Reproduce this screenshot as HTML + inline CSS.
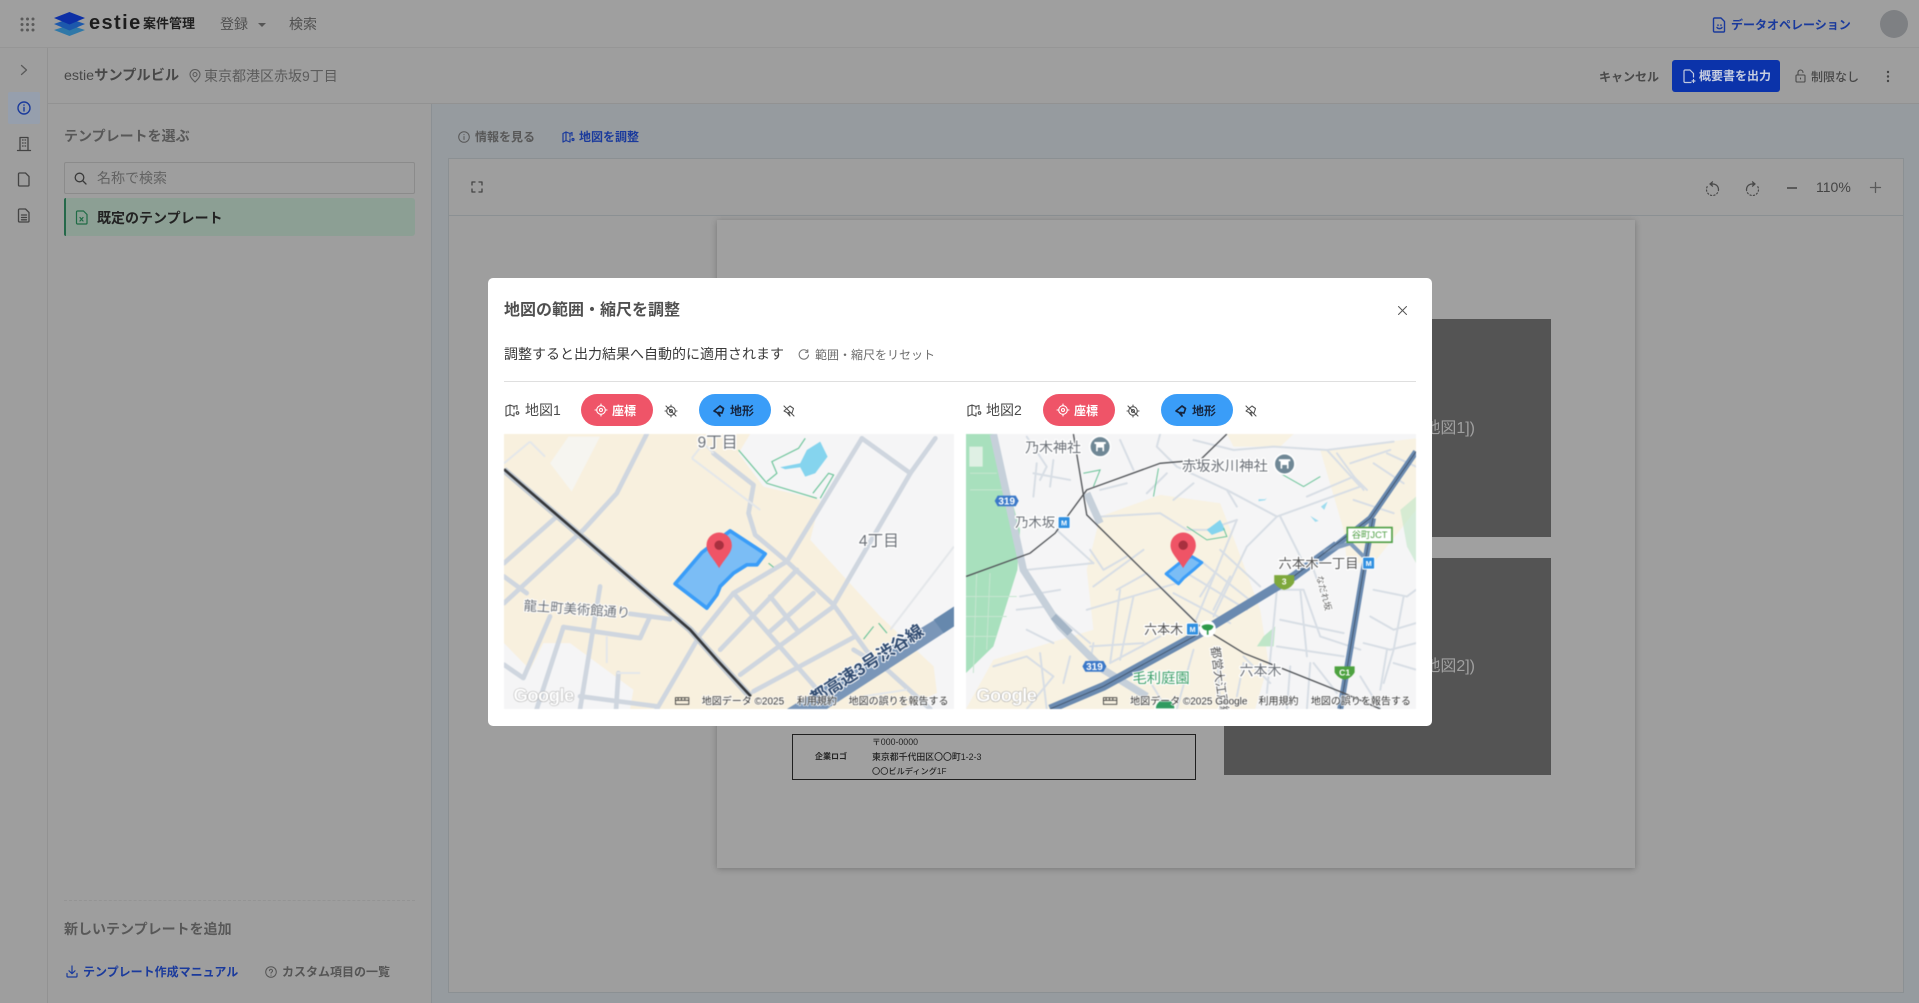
<!DOCTYPE html>
<html lang="ja"><head><meta charset="utf-8"><title>estie 案件管理</title>
<style>
*{box-sizing:border-box}
html,body{margin:0;padding:0;width:1919px;height:1003px;overflow:hidden;background:#9e9e9e}
body{font-family:"Liberation Sans","Noto Sans CJK JP",sans-serif;color:#555}
#r{position:relative;width:1919px;height:1003px;overflow:hidden;filter:blur(.3px)}
.a{position:absolute}
.t{position:absolute;white-space:nowrap;line-height:20px;font-size:14px}
.b{font-weight:700}
svg{position:absolute;overflow:visible}
svg text{font-family:"Liberation Sans","Noto Sans CJK JP",sans-serif}
.i{fill:none;stroke:currentColor;stroke-width:1.3;stroke-linecap:round;stroke-linejoin:round}
.lb{paint-order:stroke;stroke:#fff;stroke-width:8px;stroke-linejoin:round;fill:#6a6f76}
.at{font-size:30px;fill:#333;paint-order:stroke;stroke:rgba(255,255,255,.75);stroke-width:5px}
.gg{font-size:56px;font-weight:700;fill:#fff;stroke:#9a9a9a;stroke-width:2.5px;paint-order:stroke;letter-spacing:-2px}
.m{filter:blur(.5px)}
</style></head><body><div id="r">

<!-- top bar -->
<div class="a" style="left:0;top:0;width:1919px;height:48px;background:#9f9f9f;border-bottom:1px solid #969696"></div>
<svg style="left:20px;top:17px" width="15" height="15" fill="#5a5a5a"><circle cx="2" cy="2" r="1.5"/><circle cx="7.5" cy="2" r="1.5"/><circle cx="13" cy="2" r="1.5"/><circle cx="2" cy="7.5" r="1.5"/><circle cx="7.5" cy="7.5" r="1.5"/><circle cx="13" cy="7.5" r="1.5"/><circle cx="2" cy="13" r="1.5"/><circle cx="7.5" cy="13" r="1.5"/><circle cx="13" cy="13" r="1.5"/></svg>
<svg style="left:54px;top:12px" width="31" height="24"><path d="M15.5 13 31 18 15.500 24 0 18Z" fill="#2f78a8"/><path d="M15.500 6.500 31 12 15.500 18.500 0 12Z" fill="#1c58ac"/><path d="M15.500 0 31 6 15.500 12.500 0 6Z" fill="#0d2fa5"/></svg>
<div class="t b" style="left:89px;top:11px;font-size:20px;line-height:24px;letter-spacing:1.4px;color:#1d1d1d">estie</div>
<div class="t b" style="left:143px;top:14px;font-size:13px;color:#1f1f1f">案件管理</div>
<div class="t" style="left:220px;top:14px;color:#505050">登録</div>
<div class="a" style="left:258px;top:23px;border:4px solid transparent;border-top:4px solid #555"></div>
<div class="t" style="left:289px;top:14px;color:#505050">検索</div>
<svg class="i" style="left:1713px;top:17px;color:#1a3a9c;stroke-width:1.4" width="13" height="16"><path d="M1.500 1h6.500l3.500 3.500v9.500a1 1 0 0 1-1 1h-9a1 1 0 0 1-1-1V2a1 1 0 0 1 1-1Z"/><path d="M4 10.500c1 1.500 4 1.500 5 0"/><path d="M5 8v.5M8 8v.5"/></svg>
<div class="t b" style="left:1731px;top:15px;font-size:12px;color:#1a3a9c">データオペレーション</div>
<div class="a" style="left:1880px;top:10px;width:28px;height:28px;border-radius:50%;background:#7e8083"></div>

<!-- left rail -->
<div class="a" style="left:47px;top:48px;width:1px;height:955px;background:#929292"></div>
<svg class="i" style="left:19px;top:64px;color:#5a5a5a" width="10" height="12"><path d="M2.500 1.500 7.500 6 2.500 10.500"/></svg>
<div class="a" style="left:8px;top:92px;width:32px;height:32px;background:#969fad;border-radius:2px"></div>
<svg class="i" style="left:17px;top:101px;color:#1a3a9c;stroke-width:1.4" width="14" height="14"><circle cx="7" cy="7" r="6"/><path d="M7 6.500v3.500M7 4v.3"/></svg>
<svg class="i" style="left:17px;top:136px;color:#444" width="14" height="15"><path d="M3 14V1.500h8V14M.5 14.500h13M5.500 4h.6M8 4h.6M5.500 7h.6M8 7h.6M5.500 10h.6M8 10h.6"/></svg>
<svg class="i" style="left:18px;top:172px;color:#444" width="12" height="15"><path d="M1.500 1h6l3.500 3.500v8.500a1 1 0 0 1-1 1h-8.500a1 1 0 0 1-1-1V2a1 1 0 0 1 1-1Z"/></svg>
<svg class="i" style="left:18px;top:208px;color:#444" width="12" height="15"><path d="M1.500 1h6l3.500 3.500v8.500a1 1 0 0 1-1 1h-8.500a1 1 0 0 1-1-1V2a1 1 0 0 1 1-1Z"/><path d="M3.500 7h5M3.500 9.500h5M3.500 11.800h5"/></svg>

<!-- sub header -->
<div class="a" style="left:48px;top:103px;width:1871px;height:1px;background:#929292"></div>
<div class="t" style="left:64px;top:66px;font-size:14.250px;color:#484848">estie<span class="b">サンプルビル</span></div>
<svg class="i" style="left:189px;top:69px;color:#5a5a5a;stroke-width:1.1" width="12" height="14"><path d="M6 13C3 10 1 8 1 5.500a5 5 0 0 1 10 0C11 8 9 10 6 13Z"/><circle cx="6" cy="5.500" r="2"/></svg>
<div class="t" style="left:204px;top:66px;color:#5c5c5c">東京都港区赤坂9丁目</div>
<div class="t b" style="left:1599px;top:67px;font-size:12px;color:#4a4a4a">キャンセル</div>
<div class="a" style="left:1672px;top:60px;width:108px;height:32px;background:#0b33aa;border-radius:3px"></div>
<svg class="i" style="left:1683px;top:69px;color:#c3cbe0;stroke-width:1.200" width="13" height="15"><path d="M8 13.500H2a1 1 0 0 1-1-1V2a1 1 0 0 1 1-1h5l3.500 3.500V8"/><path d="M10.500 10.500v3M9 12h3"/></svg>
<div class="t b" style="left:1699px;top:66px;font-size:12px;color:#c6cde0">概要書を出力</div>
<svg class="i" style="left:1795px;top:69px;color:#4a4a4a;stroke-width:1.1" width="11" height="14"><rect x="1" y="6" width="9" height="7" rx="1"/><path d="M3 6V3.500a2.500 2.500 0 0 1 5 0"/><path d="M5.500 9v1"/></svg>
<div class="t" style="left:1811px;top:67px;font-size:12px;color:#474747;font-weight:500">制限なし</div>
<svg style="left:1886px;top:70px" width="4" height="13" fill="#444"><circle cx="2" cy="2" r="1.200"/><circle cx="2" cy="6.500" r="1.200"/><circle cx="2" cy="11" r="1.200"/></svg>

<!-- left panel -->
<div class="t b" style="left:64px;top:126px;color:#585858">テンプレートを選ぶ</div>
<div class="a" style="left:64px;top:162px;width:351px;height:32px;border:1px solid #8b8b8b;border-radius:2px"></div>
<svg class="i" style="left:74px;top:172px;color:#3a3a3a;stroke-width:1.300" width="13" height="13"><circle cx="5.500" cy="5.500" r="4.300"/><path d="M9 9l3 3"/></svg>
<div class="t" style="left:97px;top:168px;color:#626262">名称で検索</div>
<div class="a" style="left:64px;top:198px;width:351px;height:38px;background:#8c9f94;border-left:2px solid #25694a;border-radius:2px 3px 3px 2px"></div>
<svg class="i" style="left:76px;top:210px;color:#1f6b45;stroke-width:1.200" width="12" height="15"><path d="M1.500 1h6l3.500 3.500v8.500a1 1 0 0 1-1 1h-8.500a1 1 0 0 1-1-1V2a1 1 0 0 1 1-1Z"/><path d="M4 7.500l3 3.500M7 7.500l-3 3.500"/></svg>
<div class="t b" style="left:97px;top:208px;color:#222">既定のテンプレート</div>
<div class="a" style="left:64px;top:900px;width:351px;border-top:1px dashed #949494"></div>
<div class="t b" style="left:64px;top:919px;color:#585858">新しいテンプレートを追加</div>
<svg class="i" style="left:66px;top:965px;color:#1a3a9c;stroke-width:1.200" width="12" height="13"><path d="M6 1v7.500M3 5.800 6 8.700 9 5.800M1 8.500v2.500a1 1 0 0 0 1 1h8a1 1 0 0 0 1-1V8.500"/></svg>
<div class="t b" style="left:83px;top:962px;font-size:12px;color:#1a3a9c">テンプレート作成マニュアル</div>
<svg class="i" style="left:265px;top:966px;color:#555;stroke-width:1" width="12" height="12"><circle cx="6" cy="6" r="5.300"/><path d="M4.500 4.800a1.500 1.500 0 1 1 2.200 1.300c-.5.300-.7.600-.7 1.100M6 9v.2"/></svg>
<div class="t b" style="left:282px;top:962px;font-size:12px;color:#555">カスタム項目の一覧</div>
<div class="a" style="left:431px;top:104px;width:1px;height:899px;background:#8b9094"></div>

<!-- main area -->
<div class="a" style="left:432px;top:104px;width:1487px;height:899px;background:#969b9f"></div>
<svg class="i" style="left:458px;top:131px;color:#585858;stroke-width:1" width="12" height="12"><circle cx="6" cy="6" r="5.300"/><path d="M6 5.500v3M6 3.500v.2"/></svg>
<div class="t b" style="left:475px;top:127px;font-size:12px;color:#585858">情報を見る</div>
<svg class="i" style="left:562px;top:131px;color:#1a3a9c;stroke-width:1.200" width="13" height="12"><path d="M1 2.500 4 1l4 1.500 2-1v3M1 2.500V11l3-1.500L8 11V8M4 1v8.500M8 2.500V6"/><circle cx="11" cy="8.500" r="1"/></svg>
<div class="t b" style="left:579px;top:127px;font-size:12px;color:#1a3a9c">地図を調整</div>

<div class="a" style="left:448px;top:158px;width:1456px;height:835px;background:#9e9e9e;border:1px solid #8b9093"></div>
<div class="a" style="left:449px;top:215px;width:1454px;height:1px;background:#8b9093"></div>
<svg class="i" style="left:471px;top:181px;color:#444" width="12" height="12"><path d="M1 4V1h3M8 1h3v3M11 8v3H8M4 11H1V8"/></svg>
<svg class="i" style="left:1705px;top:181px;color:#4a4a4a;stroke-width:1.200" width="15" height="17"><path d="M5 3h3a5.500 5.500 0 0 1 5.500 5.500"/><path d="M13.500 8.500a6 6 0 0 1-6 6 6 6 0 0 1-6-6 6 6 0 0 1 2-4.500" stroke-dasharray="1.200 2.200"/><path d="M7.500 .8 5 3l2.500 2.200" fill="#4a4a4a"/></svg>
<svg class="i" style="left:1745px;top:181px;color:#4a4a4a;stroke-width:1.200" width="15" height="17"><path d="M10 3H7A5.500 5.500 0 0 0 1.500 8.500"/><path d="M1.500 8.500a6 6 0 0 0 6 6 6 6 0 0 0 6-6 6 6 0 0 0-2-4.500" stroke-dasharray="1.200 2.200"/><path d="M7.500 .8 10 3 7.500 5.200" fill="#4a4a4a"/></svg>
<div class="a" style="left:1787px;top:187px;width:10px;height:1.500px;background:#5a5a5a"></div>
<div class="t" style="left:1816px;top:177px;color:#444;font-size:14px">110%</div>
<svg class="i" style="left:1870px;top:182px;color:#5a5a5a" width="11" height="11"><path d="M5.500 .5v10M.5 5.500h10"/></svg>

<!-- paper -->
<div class="a" style="left:717px;top:220px;width:918px;height:648px;background:#a0a0a0;box-shadow:0 1px 6px rgba(0,0,0,.25)"></div>
<div class="a" style="left:1224px;top:319px;width:327px;height:218px;background:#545454"></div>
<div class="a" style="left:1224px;top:558px;width:327px;height:217px;background:#545454"></div>
<div class="t" style="right:444px;top:419px;font-size:16px;color:#a0a0a0">([地図1])</div>
<div class="t" style="right:444px;top:657px;font-size:16px;color:#a0a0a0">([地図2])</div>
<div class="a" style="left:792px;top:734px;width:404px;height:46px;border:1px solid #1f1f1f"></div>
<div class="t b" style="left:815px;top:747px;font-size:8px;color:#222">企業ロゴ</div>
<div class="t" style="left:872px;top:732px;font-size:8.800px;color:#222;font-weight:500">〒000-0000</div>
<div class="t" style="left:872px;top:747px;font-size:8.900px;color:#222;font-weight:500">東京都千代田区〇〇町1-2-3</div>
<div class="t" style="left:872px;top:762px;font-size:8.200px;color:#222;font-weight:500">〇〇ビルディング1F</div>

<!-- modal -->
<div class="a" style="left:488px;top:278px;width:944px;height:448px;background:#fff;border-radius:5px"></div>
<div class="t b" style="left:504px;top:301px;font-size:16px;color:#505050">地図の範囲・縮尺を調整</div>
<svg class="i" style="left:1398px;top:306px;color:#555;stroke-width:1" width="9" height="9"><path d="M.5 .5l8 8M8.500 .5l-8 8"/></svg>
<div class="t" style="left:504px;top:344px;color:#3a3a3a">調整すると出力結果へ自動的に適用されます</div>
<svg class="i" style="left:798px;top:349px;color:#777;stroke-width:1.100" width="11" height="11"><path d="M9.500 2.500a4.700 4.700 0 1 0 1 3.500"/><path d="M9.800 .8v2.500H7.500"/></svg>
<div class="t" style="left:815px;top:345px;font-size:12px;color:#6e6e6e">範囲・縮尺をリセット</div>
<div class="a" style="left:504px;top:381px;width:912px;height:1px;background:#dfdfdf"></div>

<!-- map 1 head -->
<svg class="i" style="left:505px;top:404px;color:#4d4d4d;stroke-width:1.100" width="15" height="14"><path d="M1 2.500 5 1l4 1.500 3-1v4M1 2.500V12l4-1.500L9 12V9M5 1v9.500M9 2.500V5"/><circle cx="12.500" cy="9" r="1.300"/></svg>
<div class="t" style="left:525px;top:400px;color:#4a4a4a">地図1</div>
<div class="a" style="left:581px;top:394px;width:72px;height:32px;border-radius:16px;background:#ef5468"></div>
<svg class="i" style="left:595px;top:404px;color:#fff;stroke-width:1.100" width="12" height="12"><circle cx="6" cy="6" r="4.300"/><circle cx="6" cy="6" r="1.500"/><path d="M6 0v1.700M6 10.300V12M0 6h1.700M10.300 6H12"/></svg>
<div class="t b" style="left:612px;top:401px;font-size:12px;color:#fff">座標</div>
<svg class="i" style="left:665px;top:405px;color:#555;stroke-width:1.100" width="12" height="12"><circle cx="6" cy="6" r="4.300"/><circle cx="6" cy="6" r="1.500"/><path d="M6 0v1.700M6 10.300V12M0 6h1.700M10.300 6H12M1 1l10 10"/></svg>
<div class="a" style="left:699px;top:394px;width:72px;height:32px;border-radius:16px;background:#3a9df8"></div>
<svg style="left:713px;top:405px" width="12" height="12"><path d="M1 6 7 1l3.500 2.500L9 8 5.500 7.500 7 11 4 7.500Z" fill="none" stroke="#15253f" stroke-width="1.700" stroke-linejoin="round"/></svg>
<div class="t b" style="left:730px;top:401px;font-size:12px;color:#15253f">地形</div>
<svg class="i" style="left:783px;top:405px;color:#555;stroke-width:1.100" width="12" height="12"><path d="M1 6 7 1l3.500 2.500L9 8 5.500 7.500 7 11 4 7.500ZM1 1l10 10"/></svg>

<!-- map 2 head -->
<svg class="i" style="left:967px;top:404px;color:#4d4d4d;stroke-width:1.100" width="15" height="14"><path d="M1 2.500 5 1l4 1.500 3-1v4M1 2.500V12l4-1.500L9 12V9M5 1v9.500M9 2.500V5"/><circle cx="12.500" cy="9" r="1.300"/></svg>
<div class="t" style="left:986px;top:400px;color:#4a4a4a">地図2</div>
<div class="a" style="left:1043px;top:394px;width:72px;height:32px;border-radius:16px;background:#ef5468"></div>
<svg class="i" style="left:1057px;top:404px;color:#fff;stroke-width:1.100" width="12" height="12"><circle cx="6" cy="6" r="4.300"/><circle cx="6" cy="6" r="1.500"/><path d="M6 0v1.700M6 10.300V12M0 6h1.700M10.300 6H12"/></svg>
<div class="t b" style="left:1074px;top:401px;font-size:12px;color:#fff">座標</div>
<svg class="i" style="left:1127px;top:405px;color:#555;stroke-width:1.100" width="12" height="12"><circle cx="6" cy="6" r="4.300"/><circle cx="6" cy="6" r="1.500"/><path d="M6 0v1.700M6 10.300V12M0 6h1.700M10.300 6H12M1 1l10 10"/></svg>
<div class="a" style="left:1161px;top:394px;width:72px;height:32px;border-radius:16px;background:#3a9df8"></div>
<svg style="left:1175px;top:405px" width="12" height="12"><path d="M1 6 7 1l3.500 2.500L9 8 5.500 7.500 7 11 4 7.500Z" fill="none" stroke="#15253f" stroke-width="1.700" stroke-linejoin="round"/></svg>
<div class="t b" style="left:1192px;top:401px;font-size:12px;color:#15253f">地形</div>
<svg class="i" style="left:1245px;top:405px;color:#555;stroke-width:1.100" width="12" height="12"><path d="M1 6 7 1l3.500 2.500L9 8 5.500 7.500 7 11 4 7.500ZM1 1l10 10"/></svg>

<!-- MAP 1 -->
<svg class="m" style="left:504px;top:434px;overflow:hidden" width="450" height="275" viewBox="12 12 1349 826" preserveAspectRatio="none">
<rect x="12" y="12" width="1349" height="826" fill="#f5f5f6"/>
<path d="M12 12H750L715 70 790 170 960 210 930 330 1140 560 1300 710 1310 790 1200 838H390L400 780 210 640 130 640 90 720 12 640Z" fill="#f8f0de"/>
<path d="M150 100 205 20 300 20 215 185Z" fill="#f6f5f0"/>
<g fill="none" stroke="#cfd6df" stroke-width="14" stroke-linecap="round" stroke-linejoin="round">
<path d="M440 12 350 190 250 300 12 520"/><path d="M12 400 170 260"/><path d="M12 440 80 490"/>
<path d="M640 70 760 165 745 250 765 315 860 395 1000 525 1100 665 1290 838"/>
<path d="M1085 25 860 395 700 490 600 615 470 838"/><path d="M1305 25 1230 130 1000 525"/><path d="M1085 25 1230 130"/>
<path d="M700 490 960 790"/><path d="M890 420 660 660"/><path d="M940 490 810 605"/><path d="M810 500 890 600"/>
<path d="M1000 530 720 735"/><path d="M1065 620 760 785"/><path d="M190 592 420 625 450 560"/><path d="M190 592 110 838"/>
<path d="M150 560 70 745 12 705"/><path d="M300 470 240 838"/><path d="M390 552 510 568"/><path d="M355 730 348 838"/><path d="M240 800 470 830"/>
<path d="M1060 660 1160 720"/></g>
<g fill="none" stroke="#e4e7ea" stroke-width="6"><path d="M90 35 12 100M90 35 135 80"/><path d="M575 85 610 40 640 70M575 85 780 240"/><path d="M1361 350 1300 430 1170 600"/><path d="M320 620 320 700"/><path d="M350 730 420 730"/><path d="M1220 780 1090 800"/></g>
<g fill="none" stroke="#6cc49a" stroke-width="3.500"><path d="M715 60 800 160 950 205"/><path d="M800 155 830 130 815 95 895 55 915 25"/><path d="M938 190 985 130 1000 135 960 205"/><path d="M805 400 820 412"/><path d="M1090 628 1120 590M1135 580 1160 610"/></g>
<path d="M840 112 900 100 920 60 960 35 982 80 945 130 915 140 900 112 855 118Z" fill="#85d4ee"/>
<path d="M12 120 570 600 650 690 750 800" fill="none" stroke="#c3cbd3" stroke-width="20"/>
<path d="M12 118 570 600 650 690 752 800" fill="none" stroke="#343639" stroke-width="8"/>
<path d="M860 838 1361 535V590L980 838Z" fill="#7a96b8"/><path d="M1300 570 1361 530V590L1330 610Z" fill="#6688ad"/>
<path d="M525 462 605 368 690 303 795 372 770 405 740 405 700 430 660 470 650 495 620 535Z" fill="#7bbdf5" stroke="#3a9df8" stroke-width="11" stroke-linejoin="round"/>
<path d="M657 415C640 385 619 370 619 346a38 38 0 0 1 76 0C695 370 674 385 657 415Z" fill="#ef5466"/><circle cx="657" cy="346" r="14" fill="#a8303f"/>
<text class="lb" x="592" y="52" style="font-size:47px">9丁目</text>
<text class="lb" x="1076" y="349" style="font-size:47px">4丁目</text>
<text class="lb" x="70" y="541" transform="rotate(4 70 541)" style="font-size:40px;stroke-width:6px">龍土町美術館通り</text>
<text x="945" y="826" transform="rotate(-33 945 826)" style="font-size:52px;font-weight:700;fill:#2f4a70;paint-order:stroke;stroke:#fff;stroke-width:6px;stroke-linejoin:round">都高速3号渋谷線</text>
<text class="gg" x="40" y="816">Google</text>
<g fill="none" stroke="#333" stroke-width="2.500"><rect x="526" y="804" width="40" height="20"/><path d="M526 812h40M534 804v8M544 804v8M554 804v8"/></g>
<text class="at" x="605" y="824">地図データ ©2025</text>
<text class="at" x="890" y="824">利用規約</text>
<text class="at" x="1045" y="824">地図の誤りを報告する</text>
</svg>

<!-- MAP 2 -->
<svg class="m" style="left:966px;top:434px;overflow:hidden" width="450" height="275" viewBox="18 12 1349 826" preserveAspectRatio="none">
<rect x="18" y="12" width="1349" height="826" fill="#f5f5f6"/>
<path d="M420 260 600 195 780 220 830 350 900 540 925 700 885 838H18L100 690 400 600 380 420Z" fill="#f8f2e2"/>
<path d="M1080 60 1367 25V240L1240 400H1160L1150 300Z" fill="#f8f2e2"/>
<path d="M800 12H1000L960 50 820 50Z" fill="#f8f2e2"/>
<path d="M18 12H100L180 300 172 420 100 650 18 730Z" fill="#a8e0bd"/>
<path d="M910 620 945 590 940 650 890 650Z" fill="#bfe6c8"/>
<path d="M28 50h40v60H28z" fill="#dff0e4"/>
<path d="M1320 240 1367 200V400L1340 350Z" fill="#bfe6c8" opacity=".6"/>
<g fill="none" stroke="#c6e6d0" stroke-width="3"><path d="M18 500H170M18 560H140M18 620H110M50 430 40 730M90 430 80 660M30 130H110M30 180H130"/></g>
<g fill="none" stroke="#d8dee5" stroke-width="6" stroke-linecap="round" stroke-linejoin="round">
<path d="M200 20 260 110 240 150M230 100 220 200M280 90 270 170M220 130 330 150"/>
<path d="M600 12 590 50 650 110 800 180 830 230"/><path d="M700 30 820 60 940 50 1100 60 1300 35"/><path d="M800 180 950 260 1200 170 1100 60"/><path d="M960 260 1040 420"/>
<path d="M1040 200 1180 140 1220 180"/><path d="M1130 70 1210 180"/><path d="M1170 100 1290 60"/>
<path d="M420 260 600 250 680 300 740 300 830 270"/><path d="M830 270 700 590"/><path d="M950 260 860 350 760 560"/>
<path d="M390 360 430 420 500 380"/><path d="M400 470 550 360"/><path d="M470 480 560 430 720 590"/><path d="M640 490 810 580"/><path d="M680 430 860 540"/><path d="M730 400 880 520"/><path d="M770 420 720 500M810 440 760 540M780 360 900 470"/>
<path d="M480 480 450 700M520 500 480 690M380 540 650 460"/><path d="M200 420 400 400"/><path d="M290 300 400 400M170 540 260 530 390 640"/><path d="M390 650 550 640M400 640 390 700"/><path d="M100 710 200 680 280 740 200 838"/><path d="M240 670 260 838M330 680 310 760"/><path d="M450 700 600 620"/>
<path d="M950 480 1030 480 1080 620 1200 660"/><path d="M1020 480 1040 680M960 570 1150 610M950 650 1150 680M1060 700 1130 790"/><path d="M950 480 920 790"/><path d="M850 680 930 760"/><path d="M990 710 980 838M1050 700 1040 838"/>
<path d="M1240 480 1340 500 1367 480M1230 560 1300 600 1367 580M1210 640 1290 660 1367 640M1200 740 1260 838M1280 660 1260 780M1330 500 1300 660 1270 760"/><path d="M1300 700 1367 720"/>
<path d="M1060 420 1100 530"/><path d="M700 660 650 838M560 740 620 838M770 660 780 838M850 700 830 800"/>
<path d="M1240 100 1330 160M1280 70 1367 110M1180 210 1300 250"/><path d="M620 130 560 190M700 160 640 210M500 160 420 180M480 30 520 120"/><path d="M180 500 300 480M200 600 280 640"/>
</g>
<path d="M100 12 190 420 300 590 430 720 560 800" fill="none" stroke="#c6d0da" stroke-width="22"/>
<path d="M280 560 330 610" stroke="#a4b5c6" stroke-width="22" fill="none"/>
<path d="M380 190 420 280" stroke="#c6d0da" stroke-width="22" fill="none"/>
<path d="M895 208h20l5 -5-5 8-20 3ZM1050 258l25 15-10 3ZM1082 230l20-15-10 25Z" fill="#9edcef"/>
<path d="M740 300 780 270 795 300 755 315Z" fill="#85d4ee"/>
<g fill="none" stroke="#6cc49a" stroke-width="3"><path d="M680 290 740 330 800 320 790 295"/><path d="M595 115 580 200"/><path d="M370 130 420 120 400 170"/><path d="M960 130 1030 170 1080 140"/></g>
<path d="M270 838 430 770 720 610 1000 440 1130 345" fill="none" stroke="#6a8ab0" stroke-width="26"/>
<path d="M1130 345 1230 265 1367 65" fill="none" stroke="#6a8ab0" stroke-width="18"/>
<path d="M1140 838 1210 420 1238 265" fill="none" stroke="#6a8ab0" stroke-width="18"/>
<path d="M1090 365 1170 340 1210 380" fill="none" stroke="#7f9bbc" stroke-width="12"/>
<path d="M270 838 430 770 720 610 M1000 440 1230 265 1367 65 M1140 838 1210 420 1238 265" fill="none" stroke="#2e3b4a" stroke-width="2.500" opacity=".7"/>
<path d="M18 440 210 370 285 310 380 180 600 100 720 90 800 12" fill="none" stroke="#505357" stroke-width="4"/>
<path d="M340 12 380 255 720 590 850 670 1150 790 1260 838" fill="none" stroke="#505357" stroke-width="4"/>
<path d="M618 432 670 390 695 380 725 398 700 420 670 445 655 462Z" fill="#7bbdf5" stroke="#3a9df8" stroke-width="9" stroke-linejoin="round"/>
<path d="M669 415C652 385 631 370 631 346a38 38 0 0 1 76 0C707 370 686 385 669 415Z" fill="#ef5466"/><circle cx="669" cy="346" r="14" fill="#a8303f"/>
<g>
<circle cx="420" cy="50" r="31" fill="#6f8795" stroke="#fff" stroke-width="5"/><path d="M403 36h34v6h-5v22h-5v-11h-14v11h-5V42h-5Z" fill="#fff"/>
<circle cx="973" cy="102" r="31" fill="#6f8795" stroke="#fff" stroke-width="5"/><path d="M956 88h34v6h-5v22h-5v-11h-14v11h-5V94h-5Z" fill="#fff"/>
</g>
<text class="lb" x="195" y="68" style="font-size:42px">乃木神社</text>
<text class="lb" x="665" y="123" style="font-size:43px">赤坂氷川神社</text>
<path d="M113 197h54l9 16-9 16h-54l-9-16Z" fill="#3a78c8"/><text x="140" y="224" text-anchor="middle" style="font-size:30px;font-weight:700;fill:#fff">319</text>
<path d="M376 694h54l9 16-9 16h-54l-9-16Z" fill="#3a78c8"/><text x="403" y="721" text-anchor="middle" style="font-size:30px;font-weight:700;fill:#fff">319</text>
<text class="lb" x="165" y="292" style="font-size:40px">乃木坂</text>
<rect x="294" y="260" width="36" height="36" rx="4" fill="#2f8fe0" stroke="#fff" stroke-width="3"/><text x="312" y="287" text-anchor="middle" style="font-size:22px;font-weight:700;fill:#fff">M</text>
<text class="lb" x="955" y="415" style="font-size:40px;fill:#555">六本木一丁目</text>
<rect x="1207" y="382" width="36" height="36" rx="4" fill="#2f8fe0" stroke="#fff" stroke-width="3"/><text x="1225" y="409" text-anchor="middle" style="font-size:22px;font-weight:700;fill:#fff">M</text>
<text class="lb" x="552" y="613" style="font-size:39px;fill:#555">六本木</text>
<rect x="679" y="580" width="36" height="36" rx="4" fill="#2f8fe0" stroke="#fff" stroke-width="3"/><text x="697" y="607" text-anchor="middle" style="font-size:22px;font-weight:700;fill:#fff">M</text>
<circle cx="742" cy="597" r="25" fill="#fff"/><path d="M724 590c6-8 30-8 36 0-3 10-11 12-15 12v13h-5v-13c-6 0-13-3-16-12Z" fill="#2f9a4b"/>
<rect x="1161" y="293" width="134" height="44" fill="#fff" stroke="#4f9f45" stroke-width="5"/><text x="1228" y="325" text-anchor="middle" style="font-size:28px;fill:#4f9f45">谷町JCT</text>
<path d="M942 436h60v22c-8 14-20 20-30 22-10-2-22-8-30-22Z" fill="#7ea83c"/><text x="972" y="464" text-anchor="middle" style="font-size:26px;font-weight:700;fill:#fff">3</text>
<path d="M1123 710h60v18c-8 14-20 20-30 22-10-2-22-8-30-22Z" fill="#4da23f"/><text x="1153" y="737" text-anchor="middle" style="font-size:26px;font-weight:700;fill:#fff">C1</text>
<text x="517" y="760" style="font-size:43px;fill:#3ea06a;paint-order:stroke;stroke:#fff;stroke-width:6px">毛利庭園</text>
<text class="lb" x="838" y="738" style="font-size:42px">六本木</text>
<text x="1068" y="440" transform="rotate(75 1068 440)" style="font-size:27px;fill:#666;paint-order:stroke;stroke:#fff;stroke-width:5px">なだれ坂</text>
<text x="752" y="652" transform="rotate(82 752 652)" style="font-size:36px;fill:#555;paint-order:stroke;stroke:#fff;stroke-width:6px">都営大江戸線</text>
<path d="M585 838a30 30 0 0 1 60 0Z" fill="#2f9a5f" stroke="#fff" stroke-width="4"/>
<text class="gg" x="48" y="816">Google</text>
<g fill="none" stroke="#333" stroke-width="2.500"><rect x="430" y="804" width="40" height="20"/><path d="M430 812h40M438 804v8M448 804v8M458 804v8"/></g>
<text class="at" x="510" y="824">地図データ ©2025 Google</text>
<text class="at" x="895" y="824">利用規約</text>
<text class="at" x="1052" y="824">地図の誤りを報告する</text>
</svg>
</div></body></html>
